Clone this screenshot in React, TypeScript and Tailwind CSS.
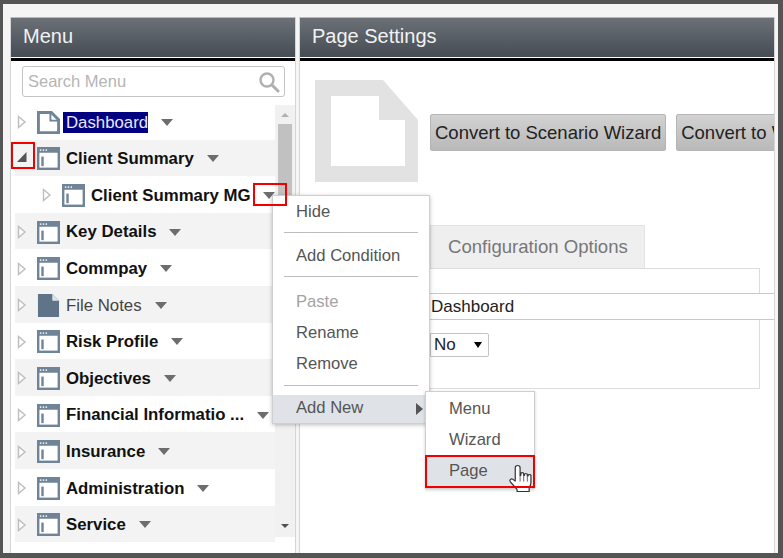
interface TreeRow {
  label: string;
  icon: 'page' | 'window' | 'note';
  bold?: boolean;
  indent?: boolean;
  open?: boolean;
  selected?: boolean;
}

const ROWS: TreeRow[] = [
  { label: 'Dashboard', icon: 'page', selected: true },
  { label: 'Client Summary', icon: 'window', bold: true, open: true },
  { label: 'Client Summary MG', icon: 'window', bold: true, indent: true },
  { label: 'Key Details', icon: 'window', bold: true },
  { label: 'Commpay', icon: 'window', bold: true },
  { label: 'File Notes', icon: 'note' },
  { label: 'Risk Profile', icon: 'window', bold: true },
  { label: 'Objectives', icon: 'window', bold: true },
  { label: 'Financial Informatio ...', icon: 'window', bold: true },
  { label: 'Insurance', icon: 'window', bold: true },
  { label: 'Administration', icon: 'window', bold: true },
  { label: 'Service', icon: 'window', bold: true },
];

const SLATE = '#6f8497';

const RowIcon = ({ type }: { type: TreeRow['icon'] }) => {
  if (type === 'page') {
    return (
      <svg width="23" height="23" viewBox="0 0 24 24" className="shrink-0">
        <path d="M1.5 1.5H15L22.5 9V22.5H1.5Z" fill="#fff" stroke={SLATE} strokeWidth="3" />
        <path d="M14 2V10H22" fill="none" stroke={SLATE} strokeWidth="2" />
      </svg>
    );
  }
  if (type === 'note') {
    return (
      <svg width="23" height="23" viewBox="0 0 24 24" className="shrink-0">
        <path d="M1 0H16L23 7V24H1Z" fill="#5f7488" />
        <path d="M16 0V7H23Z" fill="#dfe4e8" />
      </svg>
    );
  }
  return (
    <svg width="23" height="23" viewBox="0 0 24 24" className="shrink-0">
      <rect width="24" height="24" fill={SLATE} />
      <rect x="2.5" y="6" width="19" height="15.5" fill="#fff" />
      <rect x="4.5" y="10" width="2.5" height="10" fill={SLATE} />
      <rect x="3" y="2.5" width="1.5" height="1.5" fill="#fff" />
      <rect x="6" y="2.5" width="1.5" height="1.5" fill="#fff" />
      <rect x="9" y="2.5" width="1.5" height="1.5" fill="#fff" />
    </svg>
  );
};

const Caret = () => (
  <span className="ml-[13px] shrink-0 w-0 h-0 border-x-[6.5px] border-x-transparent border-t-[7px] border-t-[#6d6d6d]"></span>
);

const Expander = ({ open }: { open?: boolean }) =>
  open ? (
    <svg width="10" height="12" viewBox="0 0 10 12" className="shrink-0 mb-[3px]">
      <path d="M0 11H9.5V1Z" fill="#555" />
    </svg>
  ) : (
    <svg width="10" height="14" viewBox="0 0 10 14" className="shrink-0">
      <path d="M1.5 1.5L8 7L1.5 12.5Z" fill="#fff" stroke="#bdbdbd" strokeWidth="1.4" />
    </svg>
  );

const Row = ({ row, index }: { row: TreeRow; index: number }) => (
  <div className={`h-[36.6px] pt-[2px] flex items-center text-[16.8px] ${index % 2 === 1 ? 'bg-[#f3f3f3]' : 'bg-white'}`}>
    <div className={`flex items-center ${row.indent ? 'pl-[27px]' : 'pl-[2px]'}`}>
      <div className="w-[20px] flex items-center"><Expander open={row.open} /></div>
      <RowIcon type={row.icon} />
      {row.selected ? (
        <span className="ml-[3px] h-[21px] pl-[3px] leading-[21px] bg-[#000080] text-[#e8e8f8]">{row.label}</span>
      ) : (
        <span className={`ml-[6px] whitespace-nowrap ${row.bold ? 'font-bold text-[#111]' : 'text-[#444]'}`}>{row.label}</span>
      )}
      <Caret />
    </div>
  </div>
);

const Header = ({ title }: { title: string }) => (
  <div className="shrink-0">
    <div className="h-[40px] pl-[12px] pb-[3px] flex items-center text-[20px] text-[#f2f2f2] bg-gradient-to-b from-[#6c7177] to-[#464c54] border-t border-[#b8babd]">
      {title}
    </div>
    <div className="h-[3px] bg-black mt-[1px]"></div>
  </div>
);

const MenuItem = ({ label, muted }: { label: string; muted?: boolean }) => (
  <div className={`h-[31px] leading-[31px] pl-[23px] ${muted ? 'text-[#a3a3a3]' : 'text-[#555]'}`}>{label}</div>
);

const Divider = ({ className }: { className: string }) => (
  <div className={`h-px mx-[11px] bg-[#bdbdbd] ${className}`}></div>
);

const HandCursor = () => (
  <svg width="29" height="30" viewBox="0 0 24 29" preserveAspectRatio="none" className="absolute left-[82px] top-[9px]">
    <path
      d="M8 1.5C9.2 1.5 10 2.4 10 3.6V11L10.6 11V9.4C10.6 8 13 8 13 9.4V11.2H13.6V10.2C13.6 8.9 16 8.9 16 10.2V11.6H16.6V11C16.6 9.8 19 9.8 19 11V18C19 20 18 22 17.5 23.5V26.5H7.5V24.5C6 22.5 3.5 19.5 1.8 17C0.8 15.4 2.6 13.6 4.2 14.8L6 16.5V3.6C6 2.4 6.8 1.5 8 1.5Z"
      fill="#fff"
      stroke="#333"
      strokeWidth="1"
      strokeLinejoin="round"
    />
    <path d="M10 11V17M13 11V17M16 11.5V17" fill="none" stroke="#555" strokeWidth="0.8" />
  </svg>
);

const RedBox = ({ className }: { className: string }) => (
  <div className={`absolute border-2 border-[#f00000] ${className}`}></div>
);

const App = () => {
  return (
    <div className="relative w-[783px] h-[558px] overflow-hidden border-t-[4px] border-l-[3px] border-r-[5px] border-b-[5px] border-[#555] bg-[#f5f5f5] pt-[13px] pl-[7px] pr-[3px] flex font-['Liberation_Sans',Arial,sans-serif]">
      {/* left panel */}
      <div className="w-[286px] shrink-0 flex flex-col bg-white border-x border-[#d5d5d5]">
        <Header title="Menu" />
        <div className="ml-[11px] mr-[10px] mt-[5px] h-[31px] shrink-0 border border-[#c4c4c4] rounded-[3px] flex items-center justify-between pl-[5px] pr-[4px]">
          <span className="text-[16.5px] text-[#b5b5b5]">Search Menu</span>
          <svg width="22" height="22" viewBox="0 0 22 22">
            <circle cx="9" cy="9" r="6.5" fill="none" stroke="#b0b0b0" strokeWidth="2.4" />
            <path d="M14 14L20 20" stroke="#b0b0b0" strokeWidth="3" strokeLinecap="round" />
          </svg>
        </div>
        <div className="mt-[6px] pl-[4px] flex items-start">
          <div className="w-[260px] shrink-0">
            {ROWS.map((row, i) => (
              <Row key={row.label} row={row} index={i} />
            ))}
          </div>
          <div className="mt-[2px] w-[20px] h-[432px] shrink-0 bg-[#f1f1f1] flex flex-col items-center">
            <div className="h-[19px] flex items-center">
              <span className="w-0 h-0 border-x-[4px] border-x-transparent border-b-[4px] border-b-[#b0b0b0]"></span>
            </div>
            <div className="w-[14px] h-[120px] bg-[#c1c1c1]"></div>
            <div className="flex-1"></div>
            <div className="h-[19px] flex items-center pb-[3px]">
              <span className="w-0 h-0 border-x-[4px] border-x-transparent border-t-[4px] border-t-[#505050]"></span>
            </div>
          </div>
        </div>
      </div>

      {/* right panel */}
      <div className="ml-[3px] flex-1 min-w-0 flex flex-col bg-white border-x border-[#d5d5d5] overflow-hidden">
        <Header title="Page Settings" />
        <div className="flex items-center pl-[15px] mt-[19px] shrink-0">
          <svg width="104" height="103" viewBox="0 0 104 103" className="shrink-0">
            <path fillRule="evenodd" d="M0 0H68L103 40V102H0ZM16 16V86H90V40H64V16Z" fill="#e2e2e2" />
          </svg>
          <div className="ml-[11px] pt-[2px] flex gap-[10px]">
            {['Convert to Scenario Wizard', 'Convert to Wizard'].map(text => (
              <button
                key={text}
                className="h-[37px] px-[4px] shrink-0 whitespace-nowrap text-[18.5px] text-[#222] rounded-[2px] border border-[#b5b5b5] bg-gradient-to-b from-[#d2d2d2] to-[#b9b9b9]"
              >
                {text}
              </button>
            ))}
          </div>
        </div>
        <div className="mt-[42px] ml-[130px] shrink-0">
          <div className="w-[215px] h-[43px] leading-[41px] pl-[17px] text-[18.6px] text-[#777] bg-[#efefef] border border-[#e2e2e2] border-b-0">
            Configuration Options
          </div>
          <div className="w-[330px] h-[121px] border border-[#dcdcdc] border-l-0">
            <div className="mt-[24px] w-[360px] h-[27px] leading-[25px] pl-px border-y border-[#c8c8c8] text-[17px] text-[#222] bg-white">
              Dashboard
            </div>
            <div className="mt-[13px] w-[59px] h-[24px] border border-[#c4c4c4] rounded-r-[2px] flex items-center justify-between pl-[3px] pr-[6px] text-[17px] text-[#222] bg-white">
              No
              <span className="w-0 h-0 border-x-[4px] border-x-transparent border-t-[6px] border-t-black"></span>
            </div>
          </div>
        </div>
      </div>

      {/* context menu */}
      <div className="absolute left-[269px] top-[191px] w-[158px] h-[229px] bg-white border border-[#cfcfcf] shadow-[0_1px_4px_rgba(0,0,0,0.25)] text-[16.6px]">
        <MenuItem label="Hide" />
        <Divider className="mt-[5px] mb-[7px]" />
        <MenuItem label="Add Condition" />
        <Divider className="mt-[5px] mb-[9px]" />
        <MenuItem label="Paste" muted />
        <MenuItem label="Rename" />
        <MenuItem label="Remove" />
        <Divider className="mt-[6px] mb-[9px]" />
        <div className="h-[28px] pb-px pl-[23px] text-[#555] bg-[#dfe3e7] flex items-center justify-between pr-[6px]">
          Add New
          <span className="w-0 h-0 border-y-[6px] border-y-transparent border-l-[7px] border-l-[#555]"></span>
        </div>
      </div>

      {/* sub menu */}
      <div className="absolute left-[422px] top-[387px] w-[110px] h-[98px] pt-px bg-white border border-[#cfcfcf] shadow-[0_1px_3px_rgba(0,0,0,0.2)] text-[16.6px] text-[#555]">
        <div className="h-[31px] leading-[31px] pl-[23px]">Menu</div>
        <div className="h-[31px] leading-[31px] pl-[23px]">Wizard</div>
        <div className="relative h-[32px] leading-[32px] pl-[23px] bg-[#dfe3e7]">
          Page
          <HandCursor />
        </div>
      </div>

      {/* annotations */}
      <RedBox className="left-[8px] top-[138px] w-[24px] h-[27px]" />
      <RedBox className="left-[250px] top-[179px] w-[34px] h-[23px]" />
      <RedBox className="left-[422px] top-[451px] w-[110px] h-[33px]" />
    </div>
  );
};

export default App;
